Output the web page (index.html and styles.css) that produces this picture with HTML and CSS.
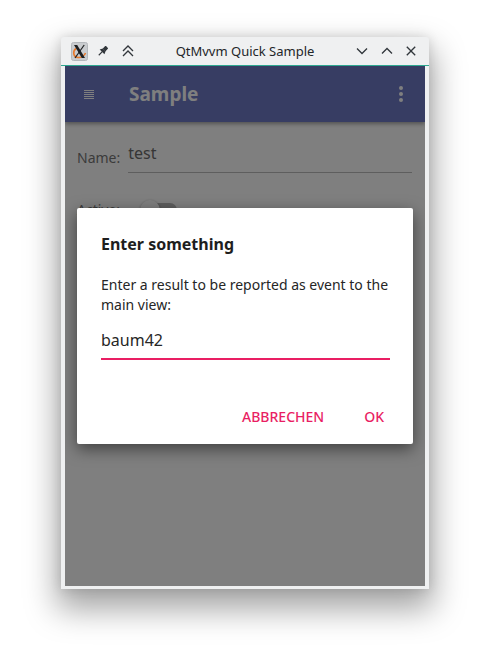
FILE: index.html
```html
<!DOCTYPE html>
<html>
<head>
<meta charset="utf-8">
<title>QtMvvm Quick Sample</title>
<link rel="stylesheet" href="styles.css">
</head>
<body>
<div class="window">
  <div class="titlebar">
    <div class="tb-left">
      <span class="appicon">
        <svg width="17" height="19" viewBox="0 0 17 19">
          <rect x="0.5" y="0.5" width="16" height="18" rx="2" fill="#c9cccf" stroke="#b4b8bc"/>
          <path d="M5 6.5 C1.5 9 2 15 7 15.5 C10.5 15.8 13.5 13.5 14.5 11" fill="none" stroke="#e8782a" stroke-width="1.6"/>
          <polygon points="3,3 6.2,3 14,16 10.8,16" fill="#1d1f21"/>
          <line x1="13.2" y1="3" x2="4" y2="16" stroke="#1d1f21" stroke-width="1.2"/>
        </svg>
      </span>
      <svg class="tb-pin" width="12" height="12" viewBox="0 0 12 12">
        <g transform="rotate(45 6 6)" fill="#31363b">
          <rect x="4.1" y="0.4" width="3.8" height="4.2" rx="0.6"/>
          <path d="M2.6 7.3 L4.1 4.4 H7.9 L9.4 7.3 Z"/>
          <rect x="5.45" y="7" width="1.1" height="5"/>
        </g>
      </svg>
      <svg class="tb-above" width="12" height="12" viewBox="0 0 12 12">
        <polyline points="1,6 6,1 11,6" fill="none" stroke="#31363b" stroke-width="1.3"/>
        <polyline points="1,11 6,6 11,11" fill="none" stroke="#31363b" stroke-width="1.3"/>
      </svg>
    </div>
    <div class="tb-title">QtMvvm Quick Sample</div>
    <div class="tb-right">
      <svg class="tb-min" width="12" height="8" viewBox="0 0 12 8">
        <polyline points="1,1.5 6,6.5 11,1.5" fill="none" stroke="#31363b" stroke-width="1.3"/>
      </svg>
      <svg class="tb-max" width="12" height="8" viewBox="0 0 12 8">
        <polyline points="1,6.5 6,1.5 11,6.5" fill="none" stroke="#31363b" stroke-width="1.3"/>
      </svg>
      <svg class="tb-close" width="10" height="10" viewBox="0 0 10 10">
        <line x1="0.8" y1="0.8" x2="9.2" y2="9.2" stroke="#31363b" stroke-width="1.3"/>
        <line x1="9.2" y1="0.8" x2="0.8" y2="9.2" stroke="#31363b" stroke-width="1.3"/>
      </svg>
    </div>
  </div>
  <div class="accent"></div>
  <div class="content">
    <header class="appbar">
      <span class="menu-btn">
        <svg width="10" height="9" viewBox="0 0 10 9" fill="#ffffff">
          <rect x="0" y="0" width="10" height="1"/>
          <rect x="0" y="2" width="10" height="1"/>
          <rect x="0" y="4" width="10" height="1"/>
          <rect x="0" y="6" width="10" height="1"/>
          <rect x="0" y="8" width="10" height="1"/>
        </svg>
      </span>
      <h1 class="appbar-title">Sample</h1>
      <span class="more-btn">
        <svg width="4" height="16" viewBox="0 0 4 16" fill="#ffffff">
          <circle cx="2" cy="2" r="2"/>
          <circle cx="2" cy="8" r="2"/>
          <circle cx="2" cy="14" r="2"/>
        </svg>
      </span>
    </header>
    <div class="form">
      <label class="label label-name">Name:</label>
      <div class="field">test</div>
      <label class="label label-active">Active:</label>
      <div class="switch"><span class="track"></span><span class="knob"></span></div>
    </div>
    <div class="dim"></div>
    <div class="dialog">
      <h2 class="dialog-title">Enter something</h2>
      <p class="dialog-text">Enter a result to be reported as event to the main view:</p>
      <div class="dialog-input">baum42</div>
      <div class="dialog-buttons">
        <span class="btn">ABBRECHEN</span>
        <span class="btn">OK</span>
      </div>
    </div>
  </div>
</div>
</body>
</html>
```

FILE: styles.css
```css
html, body {
  margin: 0;
  padding: 0;
  background: #ffffff;
}

body {
  font-family: "Noto Sans", "Open Sans", sans-serif;
  width: 490px;
  height: 651px;
  overflow: hidden;
}

.window {
  margin: 37px 0 0 61px;
  width: 368px;
  height: 552px;
  background: #eff0f1;
  border-radius: 3px 3px 0 0;
  display: flex;
  flex-direction: column;
  box-shadow: 0 16px 32px 4px rgba(0, 0, 0, 0.36), 0 0 12px rgba(0, 0, 0, 0.12);
}

.titlebar {
  height: 28px;
  display: grid;
  grid-template-columns: 1fr auto 1fr;
  align-items: center;
}

.tb-left {
  display: flex;
  align-items: center;
  padding-left: 10px;
}

.appicon {
  display: flex;
  width: 17px;
  height: 19px;
  margin-top: 1px;
}

.tb-pin {
  margin-left: 9px;
}

.tb-above {
  margin-left: 13px;
}

.tb-title {
  font-size: 13px;
  color: #232629;
  white-space: nowrap;
}

.tb-right {
  display: flex;
  align-items: center;
  justify-content: flex-end;
  padding-right: 13px;
}

.tb-max {
  margin-left: 13px;
}

.tb-close {
  margin-left: 13px;
}

.accent {
  height: 1px;
  background: #2ea891;
}

.content {
  flex: 1;
  margin: 0 4px 3px 4px;
  position: relative;
  background: #ffffff;
  overflow: hidden;
}

.appbar {
  height: 56px;
  background: #6e7ac6;
  display: flex;
  align-items: center;
  position: relative;
  box-shadow: 0 2px 4px rgba(0, 0, 0, 0.35);
}

.menu-btn {
  display: flex;
  margin-left: 19px;
}

.appbar-title {
  flex: 1;
  margin: 0 0 0 35px;
  font-size: 19px;
  font-weight: 700;
  color: #ffffff;
}

.more-btn {
  display: flex;
  margin-right: 22px;
}

.form {
  display: grid;
  grid-template-columns: auto 1fr;
  column-gap: 8px;
  row-gap: 17px;
  padding: 11px 13px 0 12px;
}

.label {
  font-size: 14px;
  line-height: 20px;
  color: #777777;
}

.label-name {
  align-self: end;
  padding-bottom: 5px;
}

.label-active {
  align-self: center;
}

.field {
  font-size: 16px;
  line-height: 20px;
  color: #6c6c6c;
  padding: 10px 0 9px 0;
  border-bottom: 1px solid #bcbcbc;
}

.switch {
  position: relative;
  height: 40px;
}

.track {
  position: absolute;
  left: 15px;
  top: 13px;
  width: 34px;
  height: 14px;
  border-radius: 7px;
  background: #bdbdbd;
}

.knob {
  position: absolute;
  left: 12px;
  top: 10px;
  width: 20px;
  height: 20px;
  border-radius: 50%;
  background: #ffffff;
  box-shadow: 0 1px 3px rgba(0, 0, 0, 0.4);
}

.dim {
  position: absolute;
  inset: 0;
  background: rgba(0, 0, 0, 0.5);
}

.dialog {
  position: absolute;
  left: 12px;
  top: 142px;
  width: 336px;
  box-sizing: border-box;
  padding: 25px 23px 9px 24px;
  background: #ffffff;
  border-radius: 2px;
  box-shadow: 0 5px 16px rgba(0, 0, 0, 0.5);
}

.dialog-title {
  margin: 0;
  font-size: 16px;
  line-height: 22px;
  font-weight: 700;
  color: #1e1e1e;
}

.dialog-text {
  margin: 20px 0 0 0;
  font-size: 14px;
  line-height: 20px;
  color: #262626;
}

.dialog-input {
  margin-top: 15px;
  padding-bottom: 8px;
  font-size: 16px;
  line-height: 20px;
  color: #262626;
  border-bottom: 2px solid #e91e63;
}

.dialog-buttons {
  margin: 39px -10px 0 0;
  display: flex;
  justify-content: flex-end;
  gap: 8px;
}

.btn {
  height: 36px;
  line-height: 36px;
  padding: 0 16px;
  font-size: 14px;
  font-weight: 500;
  color: #e91e63;
}
```
